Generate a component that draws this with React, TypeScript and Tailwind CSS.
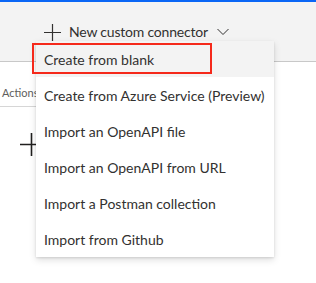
import React from "react";

const items = [
  "Create from blank",
  "Create from Azure Service (Preview)",
  "Import an OpenAPI file",
  "Import an OpenAPI from URL",
  "Import a Postman collection",
  "Import from Github",
];

export default function App() {
  return (
    <div
      className="relative w-[316px] h-[283px] overflow-hidden bg-white text-[#323130]"
      style={{ fontFamily: 'Lato, "Open Sans", sans-serif' }}
    >
      <div className="h-[2px] bg-[#0a66f5]" />
      <div className="h-[60px] bg-[#f3f3f3] border-b border-[#c8c8c8] flex items-start pl-[44px] pt-[21px]">
        <div className="flex items-center gap-[8px]">
          <svg width="17" height="17" viewBox="0 0 17 17" className="shrink-0">
            <path d="M8.5 0v17M0 8.5h17" stroke="#323130" strokeWidth="1.2" fill="none" />
          </svg>
          <span className="text-[14px] leading-[18px] tracking-[-0.2px] whitespace-nowrap">New custom connector</span>
          <svg width="12" height="8" viewBox="0 0 12 8" className="ml-[1px] shrink-0">
            <path d="M0.5 1l5.5 5.5L11.5 1" stroke="#323130" strokeWidth="1" fill="none" />
          </svg>
        </div>
      </div>
      <div className="pt-[24px]">
        <div className="w-[40px] border-b border-[#d6d6d6] h-[21px] pl-[2px] text-[11px] leading-[14px] text-[#605e5c] whitespace-nowrap">
          Actions
        </div>
        <div className="pl-[20px] pt-[26px]">
          <svg width="23" height="23" viewBox="0 0 23 23">
            <path d="M11.5 0v23M0 11.5h23" stroke="#201f1e" strokeWidth="1.6" fill="none" />
          </svg>
        </div>
      </div>

      <div className="absolute left-[36px] top-[41px] w-[238px] bg-white shadow-[0_3px_7px_rgba(0,0,0,0.13),0_1px_2px_rgba(0,0,0,0.11)]">
        {items.map((t, i) => (
          <div
            key={t}
            className={`h-[36px] flex items-center pl-[8px] text-[14px] whitespace-nowrap ${i === 0 ? "bg-[#f3f3f3]" : ""}`}
          >
            {t}
          </div>
        ))}
      </div>
      <div className="absolute left-[32px] top-[43px] w-[180px] h-[31px] border-2 border-[#f5291b]" />
    </div>
  );
}
